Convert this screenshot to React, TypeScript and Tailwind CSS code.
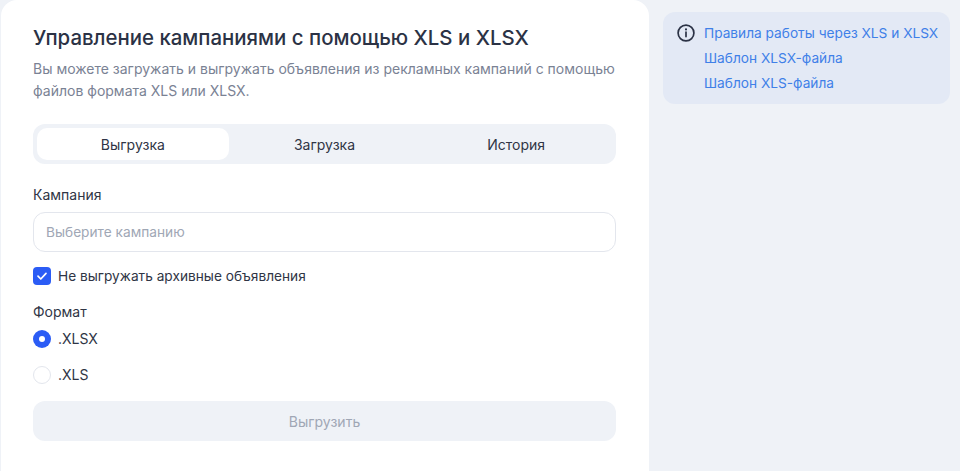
import React from "react";

export default function App() {
  return (
    <div className="w-[960px] h-[471px] overflow-hidden bg-[#eff2f7] flex font-['Inter',sans-serif] text-[#2f3545]">
      <div className="ml-[1px] w-[648px] h-[471px] bg-white rounded-t-[16px] px-[32px] pt-[24px]">
        <h1 className="text-[20.4px] leading-[28px] font-medium text-[#2b3245] whitespace-nowrap">Управление кампаниями с помощью XLS и XLSX</h1>
        <p className="mt-[6px] text-[14px] leading-[22px] text-[#7a8294]">Вы можете загружать и выгружать объявления из рекламных кампаний с помощью файлов формата XLS или XLSX.</p>
        <div className="mt-[22px] h-[40px] w-[583px] rounded-[12px] bg-[#eff2f7] p-[4px] flex text-[14px]">
          <div className="flex-1 rounded-[10px] bg-white flex items-center justify-center">Выгрузка</div>
          <div className="flex-1 flex items-center justify-center">Загрузка</div>
          <div className="flex-1 flex items-center justify-center">История</div>
        </div>
        <div className="mt-[21px] text-[14px] leading-[20px]">Кампания</div>
        <div className="mt-[7px] h-[40px] w-[583px] rounded-[12px] border border-[#e3e6ed] px-[12px] flex items-center text-[13.7px] text-[#a0a7b5]">Выберите кампанию</div>
        <div className="mt-[14px] flex items-center gap-[7px] text-[13.7px] leading-[20px]">
          <span className="w-[18px] h-[18px] rounded-[4px] bg-[#2b5cf5] flex items-center justify-center">
            <svg width="12" height="12" viewBox="0 0 12 12" fill="none"><path d="M2 6.2l2.8 2.8L10 3.4" stroke="#fff" strokeWidth="1.7" strokeLinecap="round" strokeLinejoin="round" /></svg>
          </span>
          Не выгружать архивные объявления
        </div>
        <div className="mt-[16px] text-[14px] leading-[20px]">Формат</div>
        <div className="mt-[7px] flex items-center gap-[7px] text-[14px] leading-[20px]">
          <span className="w-[18px] h-[18px] rounded-full bg-[#2b5cf5] flex items-center justify-center"><span className="w-[6px] h-[6px] rounded-full bg-white" /></span>
          .XLSX
        </div>
        <div className="mt-[16px] flex items-center gap-[7px] text-[14px] leading-[20px]">
          <span className="w-[18px] h-[18px] rounded-full border border-[#e3e6ed] bg-white" />
          .XLS
        </div>
        <div className="mt-[16px] h-[40px] w-[583px] rounded-[12px] bg-[#eff2f7] flex items-center justify-center text-[14px] text-[#a0a7b5]">Выгрузить</div>
      </div>
      <div className="ml-[14px] mt-[12px] w-[287px] h-[92px] rounded-[12px] bg-[#e3e9f5] pl-[14px] pt-[9px] flex gap-[9px] self-start text-[13.7px] leading-[25px] text-[#3f80e8]">
        <svg className="mt-[3px] shrink-0" width="18" height="18" viewBox="0 0 18 18" fill="none"><circle cx="9" cy="9" r="7.9" stroke="#2b3245" strokeWidth="1.7" /><path d="M9 8v4.6" stroke="#2b3245" strokeWidth="1.7" strokeLinecap="round" /><circle cx="9" cy="5.4" r="1.05" fill="#2b3245" /></svg>
        <div className="whitespace-nowrap">
          <div>Правила работы через XLS и XLSX</div>
          <div>Шаблон XLSX-файла</div>
          <div>Шаблон XLS-файла</div>
        </div>
      </div>
    </div>
  );
}
